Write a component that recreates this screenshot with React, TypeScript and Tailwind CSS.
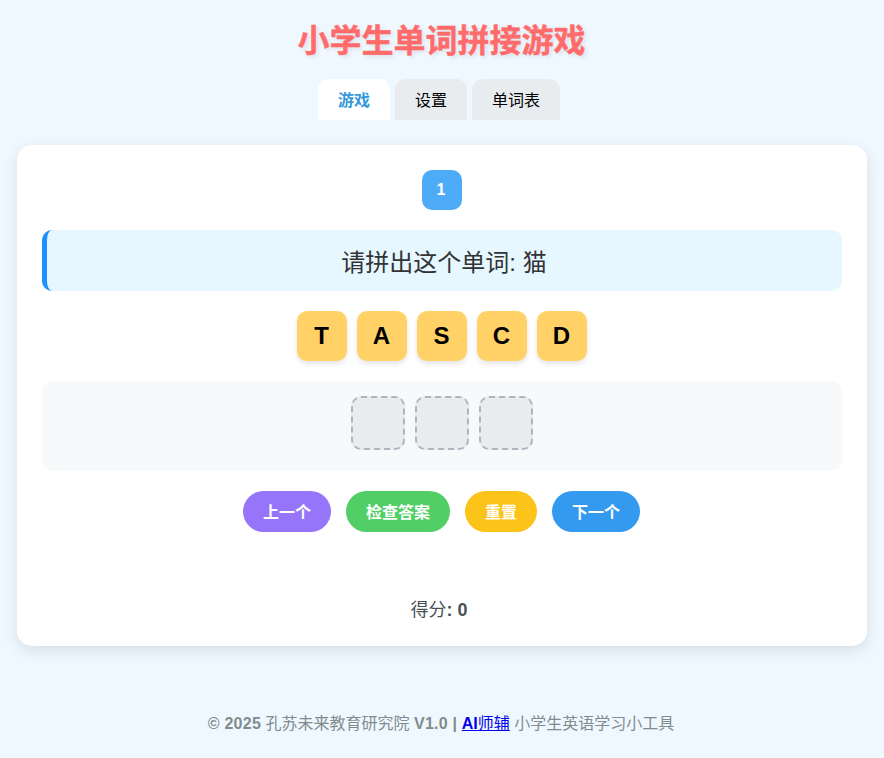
const TABS = [
  { label: '游戏', active: true },
  { label: '设置', active: false },
  { label: '单词表', active: false },
];

const LETTERS = ['T', 'A', 'S', 'C', 'D'];

const BUTTONS = [
  { label: '上一个', color: 'bg-[#9775fa]' },
  { label: '检查答案', color: 'bg-[#51cf66]' },
  { label: '重置', color: 'bg-[#fcc419]' },
  { label: '下一个', color: 'bg-[#339af0]' },
];

export default function App() {
  return (
    <div className="min-h-[758px] bg-[#f0f8ff] px-[17px] pt-5 font-['Liberation_Sans','Noto_Sans_CJK_SC',sans-serif] text-[16px] leading-[normal]">
      <h1 className="h-[43px] pr-px text-center text-[32px] leading-[43px] font-bold text-[#ff6b6b] [-webkit-text-stroke:0.4px_#ff6b6b] [text-shadow:2px_2px_4px_rgba(0,0,0,0.1)]">
        小学生单词拼接游戏
      </h1>

      {/* Tabs */}
      <div className="mt-4 mb-[25px] flex justify-center pr-px">
        {TABS.map((tab) => (
          <div
            key={tab.label}
            className={`mr-[5px] flex h-[41px] items-center rounded-t-[10px] px-5 pb-0.5 ${
              tab.active ? 'bg-white font-bold text-[#3498db]' : 'bg-[#e9ecef] text-black'
            }`}
          >
            {tab.label}
          </div>
        ))}
      </div>

      {/* Game card */}
      <div className="h-[501px] rounded-[15px] bg-white p-[25px] shadow-[0_5px_15px_rgba(0,0,0,0.1)]">
        <div className="flex justify-center">
          <div className="flex h-10 w-10 items-center justify-center rounded-[10px] bg-[#4dabf7] pr-0.5 font-bold text-white">
            1
          </div>
        </div>

        <div className="mt-5 flex h-[61px] items-center justify-center rounded-[10px] border-l-[5px] border-[#1e90ff] bg-[#e6f7ff] pr-px text-[24px] text-[#333]">
          请拼出这个单词: 猫
        </div>

        <div className="mt-5 flex justify-center gap-2.5">
          {LETTERS.map((letter) => (
            <div
              key={letter}
              className="flex h-[50px] w-[50px] items-center justify-center rounded-[10px] bg-[#ffd166] pr-px text-[24px] font-bold text-black shadow-[0_3px_5px_rgba(0,0,0,0.1)]"
            >
              {letter}
            </div>
          ))}
        </div>

        <div className="mt-5 flex h-[90px] justify-center gap-2.5 rounded-[10px] bg-[#f8f9fa] pt-[15px]">
          {[0, 1, 2].map((slot) => (
            <div
              key={slot}
              className="h-[54px] w-[54px] rounded-[10px] border-2 border-dashed border-[#adb5bd] bg-[#e9ecef]"
            />
          ))}
        </div>

        <div className="mt-5 flex justify-center gap-[15px] pr-px">
          {BUTTONS.map((button) => (
            <div
              key={button.label}
              className={`flex h-[41px] items-center rounded-[25px] px-5 pb-0.5 font-bold text-white ${button.color}`}
            >
              {button.label}
            </div>
          ))}
        </div>

        <div className="mt-[63px] pr-1.5 text-center text-[18px] text-[#495057]">
          得分<span className="font-bold">: 0</span>
        </div>
      </div>

      {/* Footer */}
      <div className="mt-[64px] pr-0.5 text-center text-[#7f8c8d]">
        <span className="font-bold tracking-[0.25px]">© 2025</span> 孔苏未来教育研究院{' '}
        <span className="font-bold tracking-[0.25px]">V1.0 |</span>{' '}
        <a href="#" className="text-[#0000ee] underline">
          <span className="font-bold">AI</span>师辅
        </a>{' '}
        小学生英语学习小工具
      </div>
    </div>
  );
}
